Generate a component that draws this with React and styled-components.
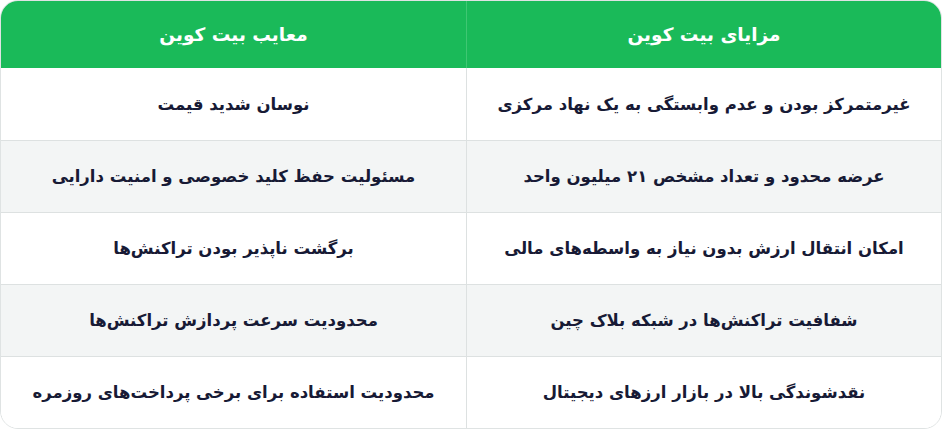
import React from "react";
import styled, { createGlobalStyle } from "styled-components";

const Global = createGlobalStyle`
  html, body { margin: 0; padding: 0; background: #ffffff; }
  body { font-family: "DejaVu Sans", "Noto Sans", sans-serif; }
`;

const Table = styled.div`
  direction: rtl;
  box-sizing: border-box;
  width: 942px;
  border: 1px solid #dfe3e3;
  border-radius: 18px;
  overflow: hidden;
  display: grid;
  grid-template-columns: 475px 1fr;
  background: #ffffff;
`;

const HeadCell = styled.div`
  height: 67px;
  background: #1aba59;
  color: #ffffff;
  font-weight: 700;
  font-size: 18.5px;
  display: flex;
  align-items: center;
  justify-content: center;
  border-left: ${(p) => (p.$first ? "1px solid #3fc773" : "none")};
  box-sizing: border-box;
`;

const Cell = styled.div`
  height: 72px;
  box-sizing: border-box;
  background: ${(p) => (p.$alt ? "#f3f5f5" : "#ffffff")};
  border-top: ${(p) => (p.$top ? "1px solid #dde1e1" : "none")};
  border-left: ${(p) => (p.$first ? "1px solid #dde1e1" : "none")};
  color: #171a35;
  font-weight: 700;
  font-size: 16.5px;
  display: flex;
  align-items: center;
  justify-content: center;
  padding: 0 12px;
`;

const pros = [
  "غیرمتمرکز بودن و عدم وابستگی به یک نهاد مرکزی",
  "عرضه محدود و تعداد مشخص ۲۱ میلیون واحد",
  "امکان انتقال ارزش بدون نیاز به واسطه‌های مالی",
  "شفافیت تراکنش‌ها در شبکه بلاک چین",
  "نقدشوندگی بالا در بازار ارزهای دیجیتال",
];

const cons = [
  "نوسان شدید قیمت",
  "مسئولیت حفظ کلید خصوصی و امنیت دارایی",
  "برگشت ناپذیر بودن تراکنش‌ها",
  "محدودیت سرعت پردازش تراکنش‌ها",
  "محدودیت استفاده برای برخی پرداخت‌های روزمره",
];

export default function App() {
  return (
    <>
      <Global />
      <Table>
        <HeadCell $first>مزایای بیت کوین</HeadCell>
        <HeadCell>معایب بیت کوین</HeadCell>
        {pros.map((p, i) => (
          <React.Fragment key={i}>
            <Cell $first $alt={i % 2 === 1} $top={i > 0}>{p}</Cell>
            <Cell $alt={i % 2 === 1} $top={i > 0}>{cons[i]}</Cell>
          </React.Fragment>
        ))}
      </Table>
    </>
  );
}
